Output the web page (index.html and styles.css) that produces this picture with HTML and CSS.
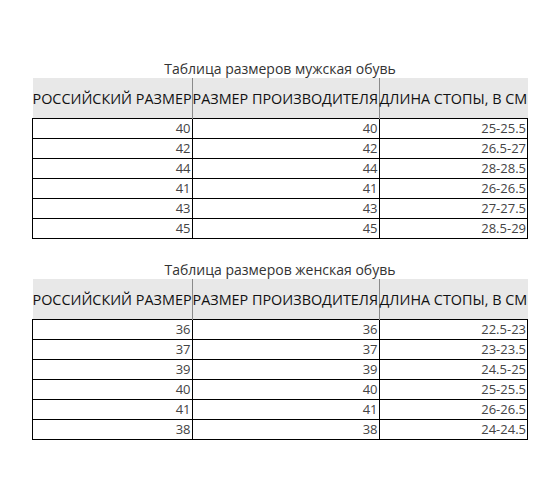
FILE: index.html
```html
<!DOCTYPE html>
<html lang="ru">
<head>
<meta charset="utf-8">
<link rel="stylesheet" href="styles.css">
</head>
<body>
<div class="page">
  <section class="block">
    <div class="caption">Таблица размеров мужская обувь</div>
    <table class="sizes">
      <thead>
        <tr><th class="c1">РОССИЙСКИЙ РАЗМЕР</th><th class="c2">РАЗМЕР ПРОИЗВОДИТЕЛЯ</th><th class="c3">ДЛИНА СТОПЫ, В СМ</th></tr>
      </thead>
      <tbody>
        <tr><td>40</td><td>40</td><td>25-25.5</td></tr>
        <tr><td>42</td><td>42</td><td>26.5-27</td></tr>
        <tr><td>44</td><td>44</td><td>28-28.5</td></tr>
        <tr><td>41</td><td>41</td><td>26-26.5</td></tr>
        <tr><td>43</td><td>43</td><td>27-27.5</td></tr>
        <tr><td>45</td><td>45</td><td>28.5-29</td></tr>
      </tbody>
    </table>
  </section>
  <section class="block">
    <div class="caption">Таблица размеров женская обувь</div>
    <table class="sizes">
      <thead>
        <tr><th class="c1">РОССИЙСКИЙ РАЗМЕР</th><th class="c2">РАЗМЕР ПРОИЗВОДИТЕЛЯ</th><th class="c3">ДЛИНА СТОПЫ, В СМ</th></tr>
      </thead>
      <tbody>
        <tr><td>36</td><td>36</td><td>22.5-23</td></tr>
        <tr><td>37</td><td>37</td><td>23-23.5</td></tr>
        <tr><td>39</td><td>39</td><td>24.5-25</td></tr>
        <tr><td>40</td><td>40</td><td>25-25.5</td></tr>
        <tr><td>41</td><td>41</td><td>26-26.5</td></tr>
        <tr><td>38</td><td>38</td><td>24-24.5</td></tr>
      </tbody>
    </table>
  </section>
</div>
</body>
</html>
```
FILE: styles.css
```css
html, body {
  margin: 0;
  padding: 0;
  background: #ffffff;
}
.page {
  width: 560px;
  padding-top: 60px;
  display: flex;
  flex-direction: column;
  align-items: center;
  gap: 22px;
  font-family: "Open Sans", "DejaVu Sans", sans-serif;
}
.block {
  display: flex;
  flex-direction: column;
  align-items: center;
}
.caption {
  font-size: 14px;
  line-height: 18px;
  color: #333;
}
.sizes {
  border-collapse: collapse;
  table-layout: fixed;
  width: 495px;
}
.sizes th {
  background: #e8e8e8;
  height: 40px;
  padding: 0;
  font-weight: normal;
  font-size: 14.4px;
  color: #111;
  text-align: left;
  white-space: nowrap;
  border-left: 1px solid #8a8a8a;
  overflow: visible;
}
.sizes th.c1 { width: 159px; border-left: none; }
.sizes th.c2 { width: 186px; }
.sizes th.c3 { width: 148px; }
.sizes td {
  border: 1px solid #000;
  height: 19px;
  padding: 0 1px 0 0;
  text-align: right;
  font-size: 13px;
  line-height: 19px;
  color: #444;
}
```
